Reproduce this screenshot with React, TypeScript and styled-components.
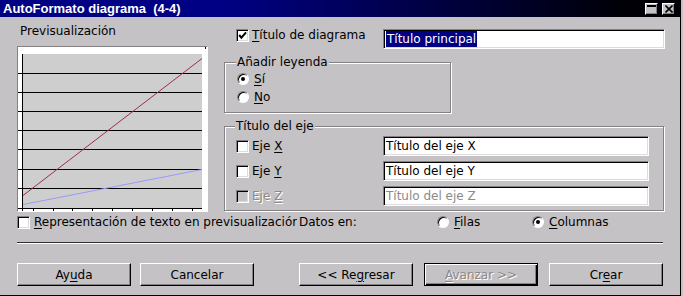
import styled, { createGlobalStyle } from "styled-components";

const FACE = "#c5c2c5";
const SHADE = "#848284";
const DISABLED = "#8c898c";

const GlobalStyle = createGlobalStyle`
  html, body {
    margin: 0;
    padding: 0;
    background: ${FACE};
  }
  body {
    font-family: "DejaVu Sans", Verdana, sans-serif;
    font-size: 12px;
    line-height: 14px;
    color: #000;
  }
  * {
    box-sizing: border-box;
  }
  u {
    text-underline-offset: 2px;
  }
`;

// dialog frame with a caption bar and a grey body
const Window = styled.div`
  width: 681px;
  height: 296px;
  display: flex;
  flex-direction: column;
  background: ${FACE};
  border-right: 1px solid #000;
  border-bottom: 1px solid #000;
  overflow: hidden;
`;

const TitleBar = styled.div`
  height: 17px;
  flex: none;
  display: flex;
  align-items: center;
  gap: 4px;
  padding: 0 5px 0 3px;
  background: linear-gradient(90deg, #000084 0%, #000084 33%, #000006 92%);
  color: #fff;
  font: bold 13px/17px "Liberation Sans", Arial, sans-serif;
`;

const TitleText = styled.span`
  flex: 1;
  white-space: pre;
`;

const TitleButton = styled.button`
  width: 13px;
  height: 12px;
  padding: 0;
  display: flex;
  align-items: center;
  justify-content: center;
  background: ${FACE};
  border: 1px solid;
  border-color: #fff #000 #000 #fff;
  box-shadow: inset -1px -1px 0 ${SHADE};

  svg {
    display: block;
  }
`;

const Body = styled.div`
  flex: 1;
  display: flex;
  flex-direction: column;
  padding: 0 15px 0 17px;
`;

const TopSection = styled.div`
  display: flex;
  align-items: flex-start;
`;

// left column: caption and chart preview
const PreviewColumn = styled.div`
  width: 191px;
  flex: none;
  display: flex;
  flex-direction: column;
`;

const PreviewCaption = styled.span`
  margin: 7px 0 0 3px;
`;

const PreviewFrame = styled.div`
  margin-top: 8px;
  width: 191px;
  height: 166px;
  border: 1px solid;
  border-color: ${SHADE} #fff #fff ${SHADE};
  background: #fff;
  line-height: 0;
`;

// right column: title, legend and axis options
const OptionsColumn = styled.div`
  flex: 1;
  margin-left: 16px;
  display: flex;
  flex-direction: column;
  align-items: flex-start;
`;

const TitleRow = styled.div`
  align-self: stretch;
  display: flex;
  align-items: flex-start;
  height: 20px;
  margin-top: 12px;
  padding-left: 12px;
`;

const Group = styled.fieldset<{ $width: number; $pad: string }>`
  width: ${(p) => p.$width}px;
  min-width: 0;
  margin: 6px 0 0;
  padding: ${(p) => p.$pad};
  border: 1px solid ${SHADE};
  box-shadow: inset 1px 1px 0 #fff, 1px 1px 0 #fff;
  display: flex;
  flex-direction: column;
`;

const GroupTitle = styled.legend`
  margin-left: -1px;
  padding: 0 1px;
  background: ${FACE};
  line-height: 14px;
`;

const GroupRow = styled.div<{ $height: number }>`
  display: flex;
  align-items: center;
  height: ${(p) => p.$height}px;
`;

const AxisRows = styled.div`
  display: flex;
  flex-direction: column;
  gap: 5px;
`;

const Label = styled.span<{ $disabled?: boolean; $gap?: number; $lift?: number }>`
  margin-left: ${(p) => p.$gap ?? 3}px;
  margin-top: ${(p) => -(p.$lift ?? 0)}px;
  white-space: nowrap;
  color: ${(p) => (p.$disabled ? DISABLED : "#000")};
  text-shadow: ${(p) => (p.$disabled ? "1px 1px 0 #fff" : "none")};
`;

const Box = styled.span<{ $disabled?: boolean }>`
  width: 13px;
  height: 13px;
  flex: none;
  display: inline-flex;
  align-items: center;
  justify-content: center;
  background: ${(p) => (p.$disabled ? FACE : "#fff")};
  border: 1px solid;
  border-color: ${SHADE} #fff #fff ${SHADE};
  box-shadow: inset 1px 1px 0 #000, inset -1px -1px 0 #dedbde;
`;

const Radio = styled.span`
  width: 12px;
  height: 12px;
  flex: none;
  border-radius: 50%;
  display: inline-flex;
  align-items: center;
  justify-content: center;
  background: #fff;
  border: 1px solid;
  border-color: ${SHADE} #fff #fff ${SHADE};
  box-shadow: inset 1px 1px 0 #000;
`;

const RadioDot = styled.span`
  width: 4px;
  height: 4px;
  border-radius: 50%;
  background: #000;
`;

const TextField = styled.div<{ $width: number; $disabled?: boolean }>`
  margin-left: auto;
  width: ${(p) => p.$width}px;
  height: 20px;
  flex: none;
  padding: 0 2px;
  background: #fff;
  border: 1px solid;
  border-color: ${SHADE} #fff #fff ${SHADE};
  box-shadow: inset 1px 1px 0 #000, inset -1px -1px 0 #dedbde;
  line-height: 18px;
  white-space: nowrap;
  overflow: hidden;
  color: ${(p) => (p.$disabled ? DISABLED : "#000")};
`;

const Selected = styled.span`
  display: inline-block;
  margin-top: 1px;
  padding: 0 1px;
  line-height: 16px;
  background: #000084;
  color: #fff;
`;

// row under the chart: preview text option and series orientation
const DataRow = styled.div`
  display: flex;
  align-items: center;
  height: 14px;
  margin-top: 3px;
`;

// the label is longer than its slot, as in the original dialog
const ClippedLabel = styled.span`
  width: 263px;
  flex: none;
  margin-left: 4px;
  white-space: nowrap;
  overflow: hidden;
`;

const DataCaption = styled.span`
  width: 138px;
  flex: none;
  margin-left: 2px;
`;

const RadioOption = styled.span<{ $width?: number }>`
  display: flex;
  align-items: center;
  width: ${(p) => (p.$width ? `${p.$width}px` : "auto")};
  flex: none;
`;

const Separator = styled.div`
  margin: 13px 2px 0 0;
  height: 2px;
  border-top: 1px solid #313031;
  border-bottom: 1px solid #fff;
`;

const ButtonRow = styled.div`
  display: flex;
  margin-top: 19px;
`;

const ButtonGroup = styled.div<{ $gap: number; $offset?: number }>`
  display: flex;
  gap: ${(p) => p.$gap}px;
  margin-left: ${(p) => p.$offset ?? 0}px;
`;

const PushButton = styled.button<{ $default?: boolean }>`
  width: 114px;
  height: 23px;
  padding: 0;
  font: inherit;
  line-height: 14px;
  background: ${FACE};
  color: ${(p) => (p.$default ? DISABLED : "#000")};
  text-shadow: ${(p) => (p.$default ? "1px 1px 0 #fff" : "none")};
  border: 1px solid;
  border-color: ${(p) => (p.$default ? "#000" : "#fff #000 #000 #fff")};
  box-shadow: ${(p) =>
    p.$default
      ? `inset 1px 1px 0 #fff, inset -1px -1px 0 #000, inset -2px -2px 0 ${SHADE}`
      : `inset -1px -1px 0 ${SHADE}`};
`;

const CheckMark = () => (
  <svg width="9" height="9" viewBox="0 0 9 9">
    <polyline points="1.2,4 3.4,6.6 8,1.4" fill="none" stroke="#000" strokeWidth="2" />
  </svg>
);

const CheckBox = ({ checked, disabled }: { checked?: boolean; disabled?: boolean }) => (
  <Box $disabled={disabled}>{checked && <CheckMark />}</Box>
);

const RadioButton = ({ checked }: { checked?: boolean }) => (
  <Radio>{checked && <RadioDot />}</Radio>
);

const GRID_Y = [26, 45, 64, 83, 102, 122, 141];
const TICK_X = [15, 35, 54, 74, 94, 114, 134, 154, 174];

// the tiny line chart drawn inside the preview frame
const PreviewChart = () => (
  <svg width="189" height="164" viewBox="0 0 189 164">
    <g shapeRendering="crispEdges">
      <rect x="5" y="7" width="179" height="154" fill="#cecece" />
      {GRID_Y.map((y) => (
        <rect key={y} x="0" y={y} width="184" height="1" fill="#000" />
      ))}
      <rect x="0" y="161" width="184" height="1" fill="#000" />
      <rect x="4" y="7" width="1" height="157" fill="#000" />
      {TICK_X.map((x) => (
        <rect key={x} x={x} y="161" width="1" height="3" fill="#000" />
      ))}
      <rect x="187" y="0" width="1" height="2" fill="#000" />
    </g>
    <line x1="5" y1="148.5" x2="184" y2="11.5" stroke="#a02a5e" strokeWidth="1" />
    <line x1="5" y1="157.5" x2="184" y2="122.5" stroke="#9a9aff" strokeWidth="1" />
  </svg>
);

const axes = [
  { key: "X", value: "Título del eje X" },
  { key: "Y", value: "Título del eje Y" },
  { key: "Z", value: "Título del eje Z", disabled: true },
];

const App = () => {
  return (
    <>
      <GlobalStyle />
      <Window>
        <TitleBar>
          <TitleText>AutoFormato diagrama  (4-4)</TitleText>
          <TitleButton aria-label="Minimizar">
            <svg width="9" height="8" viewBox="0 0 9 8">
              <rect x="0" y="0" width="9" height="2" fill="#000" />
            </svg>
          </TitleButton>
          <TitleButton aria-label="Cerrar">
            <svg width="8" height="8" viewBox="0 0 8 8">
              <path d="M0.5 0.5 L7.5 7.5 M7.5 0.5 L0.5 7.5" stroke="#000" strokeWidth="1.6" />
            </svg>
          </TitleButton>
        </TitleBar>

        <Body>
          <TopSection>
            <PreviewColumn>
              <PreviewCaption>Previsualización</PreviewCaption>
              <PreviewFrame>
                <PreviewChart />
              </PreviewFrame>
            </PreviewColumn>

            <OptionsColumn>
              <TitleRow>
                <CheckBox checked />
                <Label $lift={1}>
                  <u>T</u>ítulo de diagrama
                </Label>
                <TextField $width={282}>
                  <Selected>Título principal</Selected>
                </TextField>
              </TitleRow>

              <Group $width={227} $pad="1px 0 6px 12px">
                <GroupTitle>Añadir leyenda</GroupTitle>
                <GroupRow $height={18}>
                  <RadioButton checked />
                  <Label $gap={5}>
                    <u>S</u>í
                  </Label>
                </GroupRow>
                <GroupRow $height={18}>
                  <RadioButton />
                  <Label $gap={5}>
                    <u>N</u>o
                  </Label>
                </GroupRow>
              </Group>

              <Group $width={440} $pad="3px 14px 4px 11px">
                <GroupTitle>Título del eje</GroupTitle>
                <AxisRows>
                  {axes.map((axis) => (
                    <GroupRow key={axis.key} $height={20}>
                      <CheckBox disabled={axis.disabled} />
                      <Label $disabled={axis.disabled}>
                        Eje <u>{axis.key}</u>
                      </Label>
                      <TextField $width={266} $disabled={axis.disabled}>
                        {axis.value}
                      </TextField>
                    </GroupRow>
                  ))}
                </AxisRows>
              </Group>
            </OptionsColumn>
          </TopSection>

          <DataRow>
            <CheckBox />
            <ClippedLabel>
              <u>R</u>epresentación de texto en previsualización
            </ClippedLabel>
            <DataCaption>Datos en:</DataCaption>
            <RadioOption $width={95}>
              <RadioButton />
              <Label $gap={5}>
                <u>F</u>ilas
              </Label>
            </RadioOption>
            <RadioOption>
              <RadioButton checked />
              <Label $gap={5}>
                <u>C</u>olumnas
              </Label>
            </RadioOption>
          </DataRow>

          <Separator />

          <ButtonRow>
            <ButtonGroup $gap={9}>
              <PushButton>
                Ay<u>u</u>da
              </PushButton>
              <PushButton>Cancelar</PushButton>
            </ButtonGroup>
            <ButtonGroup $gap={11} $offset={45}>
              <PushButton>
                &lt;&lt; Re<u>g</u>resar
              </PushButton>
              <PushButton $default>
                <u>A</u>vanzar &gt;&gt;
              </PushButton>
              <PushButton>
                Cr<u>e</u>ar
              </PushButton>
            </ButtonGroup>
          </ButtonRow>
        </Body>
      </Window>
    </>
  );
};

export default App;
